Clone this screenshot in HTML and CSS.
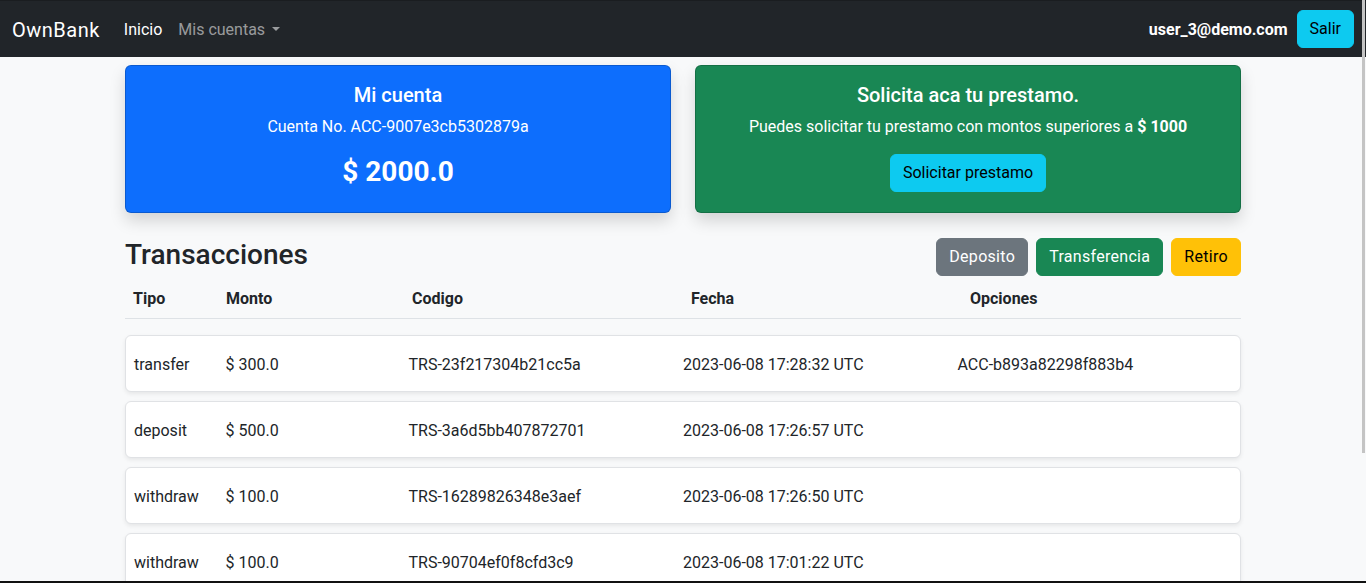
FILE: index.html
```html
<!DOCTYPE html>
<html lang="es">
<head>
<meta charset="utf-8">
<title>OwnBank</title>
<link rel="stylesheet" href="styles.css">
</head>
<body>
<nav class="navbar">
  <div class="nav-inner">
    <a class="brand" href="#">OwnBank</a>
    <ul class="nav-links">
      <li><a class="nav-link active" href="#">Inicio</a></li>
      <li><a class="nav-link dropdown-toggle" href="#">Mis cuentas</a></li>
    </ul>
    <div class="nav-right">
      <span class="user">user_3@demo.com</span>
      <button class="btn btn-info">Salir</button>
    </div>
  </div>
</nav>

<main class="container">
  <div class="cards">
    <div class="card card-primary">
      <h5 class="card-title">Mi cuenta</h5>
      <p class="card-text">Cuenta No. ACC-9007e3cb5302879a</p>
      <h3 class="balance">$ 2000.0</h3>
    </div>
    <div class="card card-success">
      <h5 class="card-title">Solicita aca tu prestamo.</h5>
      <p class="card-text">Puedes solicitar tu prestamo con montos superiores a <b>$ 1000</b></p>
      <button class="btn btn-info">Solicitar prestamo</button>
    </div>
  </div>

  <div class="tx-head">
    <h3 class="tx-title">Transacciones</h3>
    <div class="tx-actions">
      <button class="btn btn-secondary">Deposito</button>
      <button class="btn btn-success">Transferencia</button>
      <button class="btn btn-warning">Retiro</button>
    </div>
  </div>

  <div class="tx-table-head">
    <div>Tipo</div>
    <div>Monto</div>
    <div>Codigo</div>
    <div>Fecha</div>
    <div>Opciones</div>
  </div>

  <div class="tx-row">
    <div>transfer</div>
    <div>$ 300.0</div>
    <div>TRS-23f217304b21cc5a</div>
    <div>2023-06-08 17:28:32 UTC</div>
    <div>ACC-b893a82298f883b4</div>
  </div>
  <div class="tx-row">
    <div>deposit</div>
    <div>$ 500.0</div>
    <div>TRS-3a6d5bb407872701</div>
    <div>2023-06-08 17:26:57 UTC</div>
    <div></div>
  </div>
  <div class="tx-row">
    <div>withdraw</div>
    <div>$ 100.0</div>
    <div>TRS-16289826348e3aef</div>
    <div>2023-06-08 17:26:50 UTC</div>
    <div></div>
  </div>
  <div class="tx-row">
    <div>withdraw</div>
    <div>$ 100.0</div>
    <div>TRS-90704ef0f8cfd3c9</div>
    <div>2023-06-08 17:01:22 UTC</div>
    <div></div>
  </div>
</main>

<div class="scroll-thumb"></div>
<div class="frame-bottom"></div>
</body>
</html>
```

FILE: styles.css
```css
html {
  overflow: hidden;
}

body {
  margin: 0;
  font-family: Roboto, "Liberation Sans", sans-serif;
  font-size: 16px;
  line-height: 1.5;
  color: #212529;
  background: #f8f9fa;
}

a {
  text-decoration: none;
}

/* Navbar */
.navbar {
  background: #212529;
  padding: 8px 0;
  border-top: 1px solid #1a1d20;
}

.nav-inner {
  display: flex;
  align-items: center;
  padding: 0 12px;
}

.brand {
  color: #fff;
  font-size: 20px;
  line-height: 30px;
  padding: 6px 0 4px;
  margin-right: 16px;
  letter-spacing: 0.5px;
}

.nav-links {
  display: flex;
  list-style: none;
  margin: 0;
  padding: 0;
}

.nav-link {
  display: block;
  padding: 9px 8px 7px;
  color: rgba(255, 255, 255, 0.55);
}

.nav-link.active {
  color: #fff;
}

.dropdown-toggle::after {
  content: "";
  display: inline-block;
  margin-left: 0.4em;
  vertical-align: 0.255em;
  border-top: 0.3em solid;
  border-right: 0.3em solid transparent;
  border-left: 0.3em solid transparent;
}

.nav-right {
  margin-left: auto;
  display: flex;
  align-items: center;
  gap: 9px;
}

.user {
  color: #fff;
  font-weight: 700;
  padding-top: 2px;
}

/* Buttons */
.btn {
  font-family: inherit;
  font-size: 16px;
  line-height: 24px;
  padding: 6px 12px;
  border: 1px solid transparent;
  border-radius: 6px;
  cursor: pointer;
}

.btn-info {
  background: #0dcaf0;
  border-color: #0dcaf0;
  color: #000;
}

.btn-secondary {
  background: #6c757d;
  border-color: #6c757d;
  color: #fff;
}

.btn-success {
  background: #198754;
  border-color: #198754;
  color: #fff;
}

.btn-warning {
  background: #ffc107;
  border-color: #ffc107;
  color: #000;
}

.tx-actions .btn {
  letter-spacing: 0.3px;
}

/* Layout */
.container {
  max-width: 1116px;
  margin: 8px auto 0;
  padding: 0 12px;
}

.cards {
  display: grid;
  grid-template-columns: 1fr 1fr;
  gap: 24px;
}

.card {
  border: 1px solid rgba(0, 0, 0, 0.175);
  border-radius: 6px;
  padding: 17px 16px 15px;
  text-align: center;
  color: #fff;
  box-shadow: 0 8px 16px rgba(0, 0, 0, 0.15);
}

.card-primary {
  background: #0d6efd;
}

.card-success {
  background: #198754;
}

.card-title {
  font-size: 20px;
  font-weight: 500;
  line-height: 1.2;
  margin: 0 0 8px;
}

.card-text {
  margin: 0 0 16px;
}

.card-success .card-text {
  margin-bottom: 15px;
}

.card-text b {
  font-weight: 700;
}

.balance {
  font-size: 28px;
  font-weight: 700;
  line-height: 1.2;
  margin: 0 0 8px;
}

/* Transactions */
.tx-head {
  margin-top: 24px;
  display: flex;
  align-items: center;
  justify-content: space-between;
}

.tx-title {
  font-size: 28px;
  font-weight: 500;
  line-height: 1.2;
  padding-top: 1px;
  margin: 0 0 7px;
}

.tx-actions {
  display: flex;
  gap: 8px;
}

.tx-table-head {
  display: grid;
  grid-template-columns: 1fr 2fr 3fr 3fr 3fr;
  border-bottom: 1px solid #dee2e6;
  font-weight: 700;
  margin-bottom: 16px;
}

.tx-table-head > div {
  padding: 9px 8px 7px;
}

.tx-row {
  display: grid;
  grid-template-columns: 1fr 2fr 3fr 3fr 3fr;
  background: #fff;
  border: 1px solid #e0e2e5;
  border-radius: 6px;
  padding: 17px 8px 14px;
  margin-bottom: 9px;
  box-shadow: 0 2px 4px rgba(0, 0, 0, 0.075);
}

/* Window decorations over the page */
.scroll-thumb {
  position: fixed;
  top: 0;
  right: 1px;
  width: 3px;
  height: 453px;
  background: #c4c4c4;
}

.frame-bottom {
  position: fixed;
  left: 0;
  right: 0;
  bottom: 0;
  height: 2px;
  background: #111;
}
```
